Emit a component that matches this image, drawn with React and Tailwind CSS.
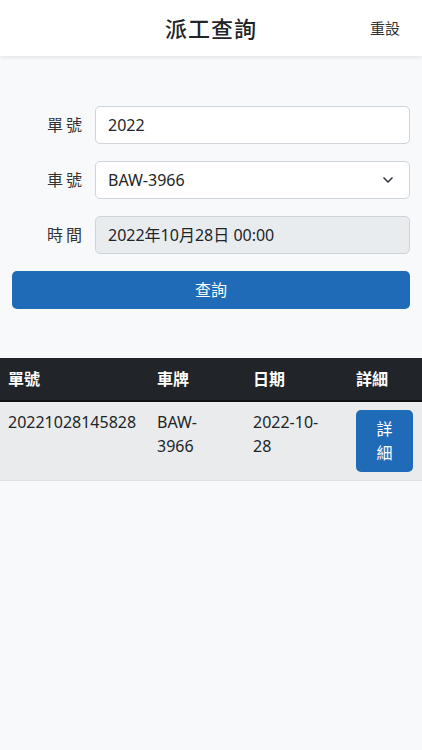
import { ChevronDown } from 'lucide-react';

const FONT = { fontFamily: '"Noto Sans", "Noto Sans CJK TC", sans-serif' };

const rows = [
  { id: '20221028145828', plate: ['BAW-', '3966'], date: ['2022-10-', '28'] },
];

export default function App() {
  return (
    <div className="min-h-[750px] bg-[#f8f9fa] text-[#212529]" style={FONT}>
      <header className="relative h-14 bg-white shadow-[0_2px_4px_rgba(0,0,0,0.08)] flex items-center justify-center">
        <h1 className="text-[22px] font-medium tracking-[1px]">派工查詢</h1>
        <button className="absolute right-[22px] top-[17px] text-[15px] text-[#333]">重設</button>
      </header>

      <form className="px-3 pt-[50px] space-y-[17px]">
        <div className="flex items-center">
          <label className="w-[83px] pr-[10px] text-right text-[16px] tracking-[3px] text-[#333]">單號</label>
          <input
            defaultValue="2022"
            className="flex-1 h-[38px] px-3 bg-white border border-[#ced4da] rounded-[5px] text-[16px] text-[#212529]"
          />
        </div>
        <div className="flex items-center">
          <label className="w-[83px] pr-[10px] text-right text-[16px] tracking-[3px] text-[#333]">車號</label>
          <div className="flex-1 h-[38px] px-3 bg-white border border-[#ced4da] rounded-[5px] flex items-center justify-between text-[16px]">
            <span>BAW-3966</span>
            <ChevronDown size={16} strokeWidth={2.5} className="text-[#343a40] mr-[1px]" />
          </div>
        </div>
        <div className="flex items-center">
          <label className="w-[83px] pr-[10px] text-right text-[16px] tracking-[3px] text-[#333]">時間</label>
          <div className="flex-1 h-[38px] px-3 bg-[#e9ecef] border border-[#ced4da] rounded-[5px] flex items-center text-[16px]">
            2022年10月28日 00:00
          </div>
        </div>
        <button
          type="button"
          className="w-full h-[38px] bg-[#1f6bb8] text-white rounded-[5px] text-[16px]"
        >
          查詢
        </button>
      </form>

      <table className="w-full mt-[49px] border-collapse text-[16px] leading-6">
        <thead>
          <tr className="bg-[#212529] text-white border-b-2 border-[#111]">
            <th className="w-[149px] px-2 py-[9px] text-left font-bold">單號</th>
            <th className="w-[96px] px-2 py-[9px] text-left font-bold">車牌</th>
            <th className="w-[103px] px-2 py-[9px] text-left font-bold">日期</th>
            <th className="px-2 py-[9px] text-left font-bold">詳細</th>
          </tr>
        </thead>
        <tbody>
          {rows.map((r) => (
            <tr key={r.id} className="bg-[#eaebec] border-b border-[#dee2e6] align-top">
              <td className="px-2 pt-2 pb-2">{r.id}</td>
              <td className="px-2 pt-2 pb-2">
                {r.plate[0]}
                <br />
                {r.plate[1]}
              </td>
              <td className="px-2 pt-2 pb-2">
                {r.date[0]}
                <br />
                {r.date[1]}
              </td>
              <td className="pl-2 pr-[9px] py-2">
                <button className="w-[57px] h-[62px] bg-[#1f6bb8] text-white rounded-[5px] leading-6 flex flex-col items-center justify-center">
                  <span>詳</span>
                  <span>細</span>
                </button>
              </td>
            </tr>
          ))}
        </tbody>
      </table>
    </div>
  );
}
